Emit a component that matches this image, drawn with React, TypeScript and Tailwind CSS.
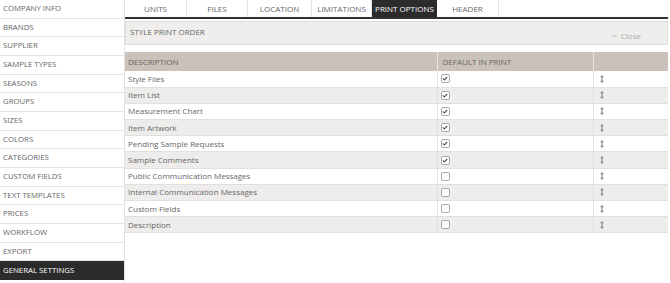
import { Minus } from "lucide-react";

const menu = [
  "COMPANY INFO",
  "BRANDS",
  "SUPPLIER",
  "SAMPLE TYPES",
  "SEASONS",
  "GROUPS",
  "SIZES",
  "COLORS",
  "CATEGORIES",
  "CUSTOM FIELDS",
  "TEXT TEMPLATES",
  "PRICES",
  "WORKFLOW",
  "EXPORT",
  "GENERAL SETTINGS",
];

const tabs = [
  { label: "UNITS", w: "w-[62px]" },
  { label: "FILES", w: "w-[61px]" },
  { label: "LOCATION", w: "w-[64px]" },
  { label: "LIMITATIONS", w: "w-[60px]" },
  { label: "PRINT OPTIONS", w: "w-[65px]" },
  { label: "HEADER", w: "w-[62px]" },
];

const rows = [
  { name: "Style Files", on: true },
  { name: "Item List", on: true },
  { name: "Measurement Chart", on: true },
  { name: "Item Artwork", on: true },
  { name: "Pending Sample Requests", on: true },
  { name: "Sample Comments", on: true },
  { name: "Public Communication Messages", on: false },
  { name: "Internal Communication Messages", on: false },
  { name: "Custom Fields", on: false },
  { name: "Description", on: false },
];

const Check = ({ on }: { on: boolean }) => (
  <span className="flex h-[9px] w-[9px] items-center justify-center rounded-[2px] border border-[#a9a9a9] bg-white">
    {on && (
      <svg width="6" height="5" viewBox="0 0 6 5">
        <path d="M0.8 2.4 L2.4 3.9 L5.2 1" fill="none" stroke="#555" strokeWidth="1.1" />
      </svg>
    )}
  </span>
);

const Sort = () => (
  <svg width="4" height="8" viewBox="0 0 4 8">
    <path d="M2 0 L4 2.2 H0 Z M2 8 L4 5.8 H0 Z" fill="#8a8a8a" />
    <rect x="1.4" y="2" width="1.2" height="4" fill="#8a8a8a" />
  </svg>
);

export default function App() {
  return (
    <div className="flex h-[283px] w-[670px] bg-white font-['Open_Sans',sans-serif] text-[8px] text-[#666]">
      <ul className="w-[125px] shrink-0 border-r border-[#e2e2e2] text-[7.8px]">
        {menu.map((m) => (
          <li
            key={m}
            className={
              m === "GENERAL SETTINGS"
                ? "flex h-[18.67px] items-center bg-[#2b2b2b] pl-[3px] text-white"
                : "flex h-[18.67px] items-center border-b border-[#e4e4e4] pl-[3px]"
            }
          >
            {m}
          </li>
        ))}
      </ul>

      <div className="flex-1 pr-[2px]">
        <div className="flex h-[19px] border-b-2 border-[#333]">
          {tabs.map((t) => (
            <div
              key={t.label}
              className={
                t.label === "PRINT OPTIONS"
                  ? `flex ${t.w} items-center justify-center bg-[#2b2b2b] text-white`
                  : `flex ${t.w} items-center justify-center border-r border-[#e2e2e2] text-[#666]`
              }
            >
              {t.label}
            </div>
          ))}
        </div>

        <div className="mt-[2px] flex h-[24px] items-start justify-between border border-[#dcdcdc] bg-[#efeeec] pl-[4px] pr-[26px] pt-[4px]">
          <span>STYLE PRINT ORDER</span>
          <span className="mt-[4px] flex items-center gap-[3px] text-[#aaa]">
            <Minus size={8} strokeWidth={2} />
            Close
          </span>
        </div>

        <table className="mt-[7px] w-full table-fixed border-collapse">
          <thead>
            <tr className="h-[19px] bg-[#c9c1ba] text-left">
              <th className="w-[312px] border-r border-[#e8e4e0] pl-[3px] font-normal">DESCRIPTION</th>
              <th className="w-[156px] border-r border-[#e8e4e0] pl-[5px] font-normal">DEFAULT IN PRINT</th>
              <th />
            </tr>
          </thead>
          <tbody>
            {rows.map((r, i) => (
              <tr
                key={r.name}
                className={`h-[16.2px] border-b border-[#e0e0e0] ${i % 2 ? "bg-[#eeedeb]" : "bg-white"}`}
              >
                <td className="border-r border-[#e0e0e0] pl-[3px]">{r.name}</td>
                <td className="border-r border-[#e0e0e0] pl-[3px]">
                  <Check on={r.on} />
                </td>
                <td className="pl-[6px]">
                  <Sort />
                </td>
              </tr>
            ))}
          </tbody>
        </table>
      </div>
    </div>
  );
}
